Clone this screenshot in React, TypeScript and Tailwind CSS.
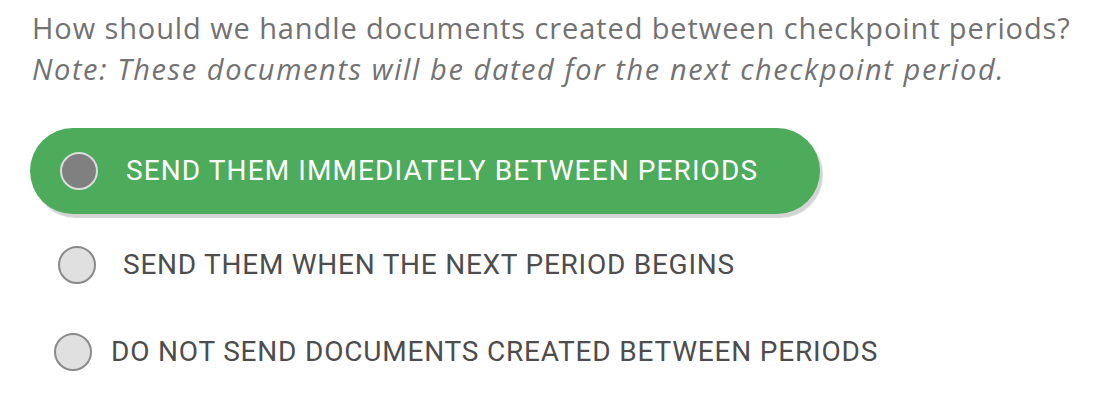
import { useState } from 'react'

const OPTIONS = [
  { id: 'immediate', label: 'SEND THEM IMMEDIATELY BETWEEN PERIODS' },
  { id: 'next', label: 'SEND THEM WHEN THE NEXT PERIOD BEGINS' },
  { id: 'none', label: 'DO NOT SEND DOCUMENTS CREATED BETWEEN PERIODS' },
]

// per-row offsets as in the design
const ROW_STYLE: Record<string, { row: string; gap: string; text: string }> = {
  immediate: {
    row: 'ml-[30px] pl-[30px] w-[790px] mb-[8px]',
    gap: 'gap-[28px]',
    text: 'tracking-[1.1px]',
  },
  next: { row: 'ml-[58px] mb-[1px]', gap: 'gap-[27px]', text: 'tracking-[0.75px]' },
  none: { row: 'ml-[54px]', gap: 'gap-[19px]', text: 'tracking-[0.8px]' },
}

export default function App() {
  const [selected, setSelected] = useState('immediate')

  return (
    <div className="w-[1114px] h-[404px] bg-white pt-[7px] font-['Roboto',sans-serif]">
      <div className="pl-[32px] text-[29px] leading-[41px] text-[#727272] font-['Open_Sans',sans-serif]">
        <p className="tracking-[0.9px]">
          How should we handle documents created between checkpoint periods?
        </p>
        <p className="italic tracking-[1.6px]">
          Note: These documents will be dated for the next checkpoint period.
        </p>
      </div>

      <div className="mt-[39px] flex flex-col">
        {OPTIONS.map((o) => {
          const active = selected === o.id
          const s = ROW_STYLE[o.id]
          return (
            <button
              key={o.id}
              onClick={() => setSelected(o.id)}
              className={
                'h-[86px] flex items-center text-left rounded-full ' +
                s.row +
                ' ' +
                s.gap +
                (active ? ' bg-[#4dab5c] shadow-[3px_4px_1px_rgba(0,0,0,0.17)]' : '')
              }
            >
              <span
                className={
                  'w-[38px] h-[38px] rounded-full border-2 flex-shrink-0 ' +
                  (active ? 'bg-[#808080] border-[#dcdcdc]' : 'bg-[#e0e0e0] border-[#8a8a8a]')
                }
              />
              <span
                className={
                  'text-[28px] ' + s.text + ' ' + (active ? 'text-white' : 'text-[#4d4d4d]')
                }
              >
                {o.label}
              </span>
            </button>
          )
        })}
      </div>
    </div>
  )
}
